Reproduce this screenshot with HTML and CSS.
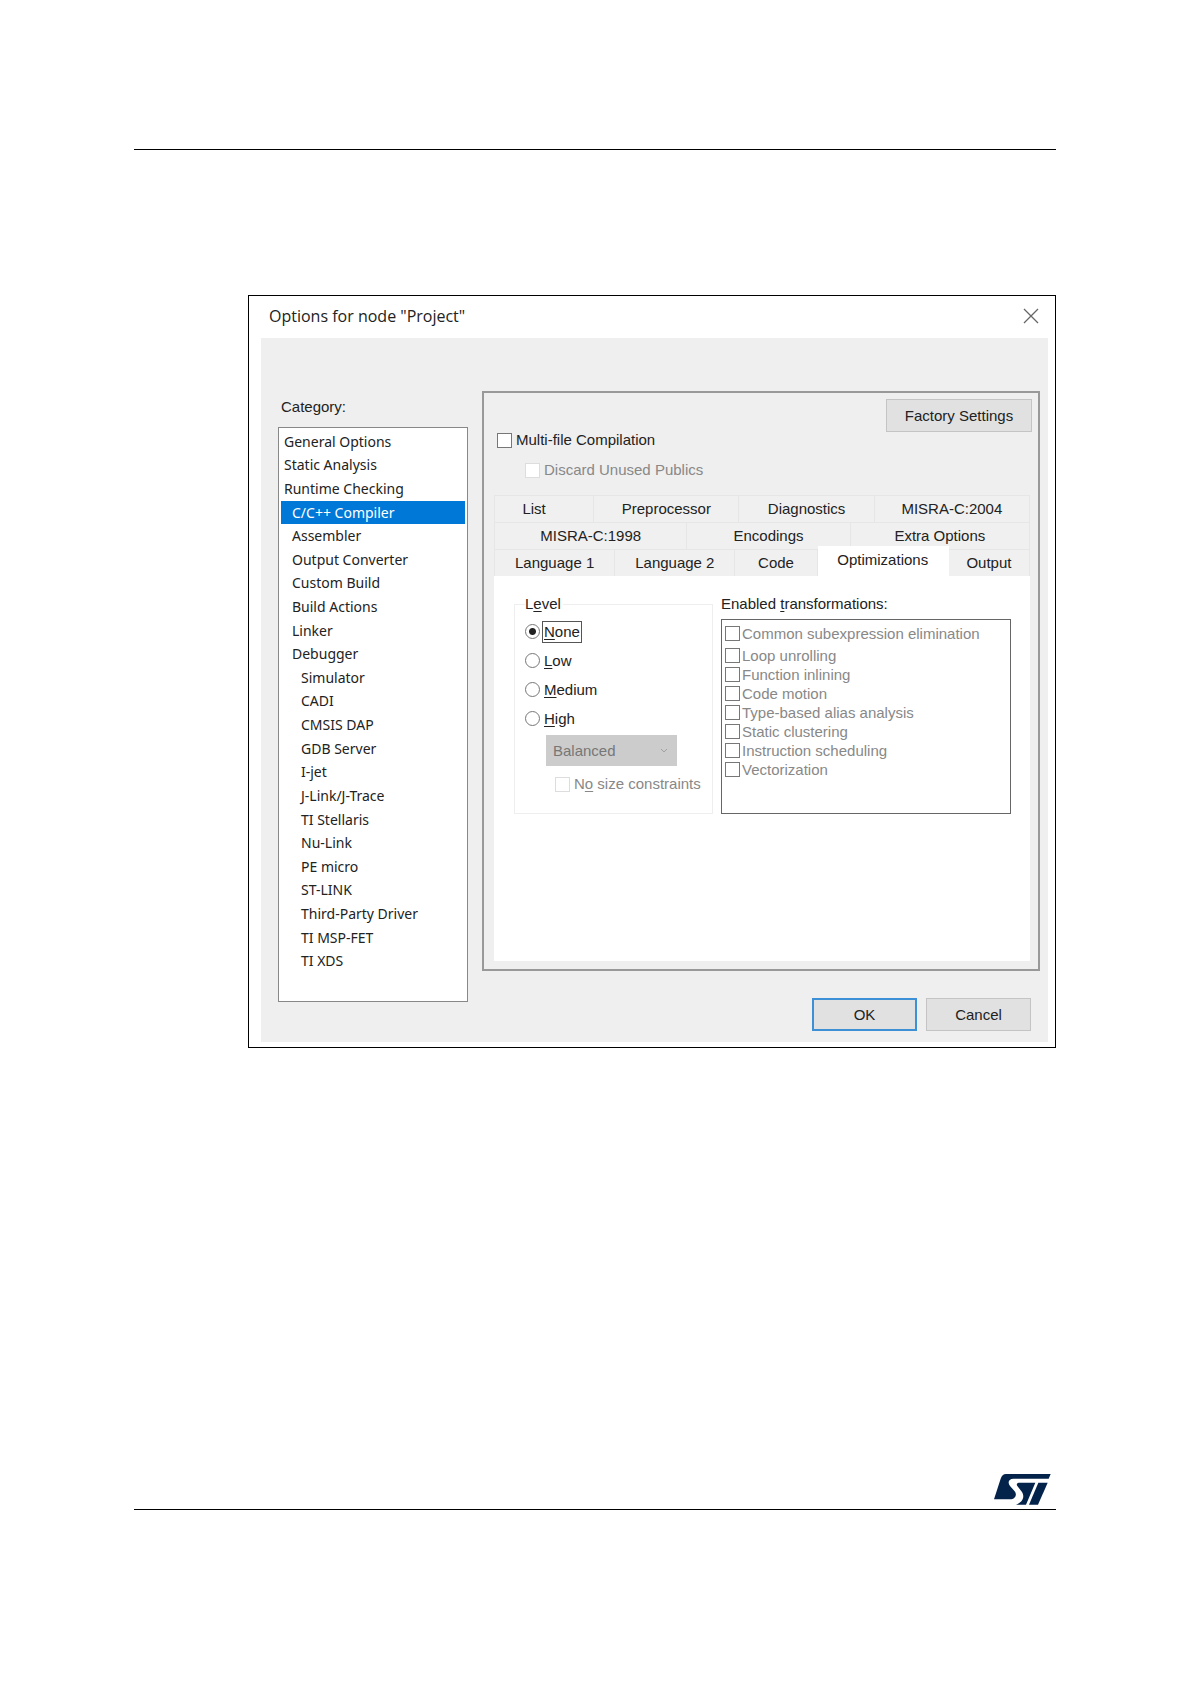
FILE: index.html
```
<!DOCTYPE html>
<html lang="en">
  <head>
    <meta charset="UTF-8" />
    <meta name="viewport" content="width=device-width, initial-scale=1.0" />
    <title>Options for node "Project"</title>
    <link rel="stylesheet" href="styles.css">
  </head>
  <body>
    <div class="page">
      <header class="page-header"></header>
      <main>
        <section class="dialog">
          <div class="dialog-title">
            <h1>Options for node "Project"</h1>
            <button class="close" type="button" aria-label="Close">
              <svg width="16" height="16" viewBox="0 0 16 16" fill="none" stroke="#666" stroke-width="1.3">
                <path d="M1 1l14 14M15 1L1 15" />
              </svg>
            </button>
          </div>
          <div class="dialog-body">
            <nav class="category" aria-labelledby="category">
              <div class="category-label" id="category">Category:</div>
              <ul class="category-list">
                <li><button type="button">General Options</button></li>
                <li><button type="button">Static Analysis</button></li>
                <li><button type="button">Runtime Checking</button></li>
                <li><button class="sub selected" type="button">C/C++ Compiler</button></li>
                <li><button class="sub" type="button">Assembler</button></li>
                <li><button class="sub" type="button">Output Converter</button></li>
                <li><button class="sub" type="button">Custom Build</button></li>
                <li><button class="sub" type="button">Build Actions</button></li>
                <li><button class="sub" type="button">Linker</button></li>
                <li><button class="sub" type="button">Debugger</button></li>
                <li><button class="subsub" type="button">Simulator</button></li>
                <li><button class="subsub" type="button">CADI</button></li>
                <li><button class="subsub" type="button">CMSIS DAP</button></li>
                <li><button class="subsub" type="button">GDB Server</button></li>
                <li><button class="subsub" type="button">I-jet</button></li>
                <li><button class="subsub" type="button">J-Link/J-Trace</button></li>
                <li><button class="subsub" type="button">TI Stellaris</button></li>
                <li><button class="subsub" type="button">Nu-Link</button></li>
                <li><button class="subsub" type="button">PE micro</button></li>
                <li><button class="subsub" type="button">ST-LINK</button></li>
                <li><button class="subsub" type="button">Third-Party Driver</button></li>
                <li><button class="subsub" type="button">TI MSP-FET</button></li>
                <li><button class="subsub" type="button">TI XDS</button></li>
              </ul>
            </nav>
            <div class="settings">
              <div class="panel">
                <div class="panel-top">
                  <button class="btn btn-factory" type="button">Factory Settings</button>
                </div>
                <div class="panel-inner">
                  <label class="check"><input type="checkbox" />Multi-file Compilation</label>
                  <label class="check check-discard"><input type="checkbox" disabled />Discard Unused Publics</label>

                  <div class="tabs" role="tablist">
                    <div class="tab-row tab-row-1">
                      <button class="tab-list" type="button" role="tab">List</button>
                      <button type="button" role="tab">Preprocessor</button>
                      <button type="button" role="tab">Diagnostics</button>
                      <button type="button" role="tab">MISRA-C:2004</button>
                    </div>
                    <div class="tab-row tab-row-2">
                      <button type="button" role="tab">MISRA-C:1998</button>
                      <button type="button" role="tab">Encodings</button>
                      <button type="button" role="tab">Extra Options</button>
                    </div>
                    <div class="tab-row tab-row-3">
                      <button type="button" role="tab">Language 1</button>
                      <button type="button" role="tab">Language 2</button>
                      <button type="button" role="tab">Code</button>
                      <button class="active" type="button" role="tab" aria-selected="true">Optimizations</button>
                      <button type="button" role="tab">Output</button>
                    </div>
                  </div>

                  <div class="tab-content">
                    <fieldset class="level">
                      <legend>L<u>e</u>vel</legend>
                      <label class="radio"><input type="radio" name="level" checked /><span class="focus"><u>N</u>one</span></label>
                      <label class="radio"><input type="radio" name="level" /><span><u>L</u>ow</span></label>
                      <label class="radio"><input type="radio" name="level" /><span><u>M</u>edium</span></label>
                      <label class="radio"><input type="radio" name="level" /><span><u>H</u>igh</span></label>
                      <div class="select">
                        <select aria-label="High level strategy" disabled>
                          <option>Balanced</option>
                        </select>
                        <svg width="8" height="5" viewBox="0 0 8 5" fill="none" stroke="#a0a0a0">
                          <path d="M1 1l3 3 3-3" />
                        </svg>
                      </div>
                      <label class="check check-size"><input type="checkbox" disabled /><span>N<u>o</u> size constraints</span></label>
                    </fieldset>

                    <div class="transformations">
                      <div class="transformations-label" id="transformations">Enabled <u>t</u>ransformations:</div>
                      <div class="transformations-list" role="group" aria-labelledby="transformations">
                        <label><input type="checkbox" disabled />Common subexpression elimination</label>
                        <label><input type="checkbox" disabled />Loop unrolling</label>
                        <label><input type="checkbox" disabled />Function inlining</label>
                        <label><input type="checkbox" disabled />Code motion</label>
                        <label><input type="checkbox" disabled />Type-based alias analysis</label>
                        <label><input type="checkbox" disabled />Static clustering</label>
                        <label><input type="checkbox" disabled />Instruction scheduling</label>
                        <label><input type="checkbox" disabled />Vectorization</label>
                      </div>
                    </div>
                  </div>
                </div>
              </div>
              <div class="actions">
                <button class="btn btn-ok" type="button">OK</button>
                <button class="btn" type="button">Cancel</button>
              </div>
            </div>
          </div>
        </section>
      </main>
      <footer class="page-footer">
        <svg class="logo" width="57" height="31" viewBox="0 0 171 93" fill="#03234b" role="img" aria-label="ST">
          <path d="M36 0H170L164 14H58C44 14 40 26 48 36L62 52C70 62 64 74 52 76H0L20 14C23 5 28 0 36 0Z" />
          <path d="M66 92C84 86 94 70 84 54L70 36C66 30 70 26 76 26H124L96 92Z" />
          <path d="M133 26H161L132 92H105Z" />
        </svg>
      </footer>
    </div>
  </body>
</html>
```

FILE: styles.css
```
* {
  margin: 0;
  padding: 0;
  box-sizing: border-box;
}

body {
  background-color: #fff;
  color: #222;
  font-family: "Liberation Sans", Arial, sans-serif;
  font-size: 15px;
  line-height: 20px;
}

button,
select {
  font: inherit;
  color: inherit;
  border: none;
  background: none;
}

u {
  text-underline-offset: 2px;
  text-decoration-thickness: 1px;
}

.page {
  display: flex;
  flex-direction: column;
  min-height: 100vh;
  padding: 0 134px 174px;
}
.page-header {
  height: 150px;
  border-bottom: 1px solid #000;
}
.page-footer {
  display: flex;
  justify-content: flex-end;
  margin-top: auto;
  padding: 0 5px 4px 0;
  border-bottom: 1px solid #000;
}
.logo {
  display: block;
}

/* dialog */
.dialog {
  margin: 145px 0 40px 114px;
  padding: 0 7px 5px 12px;
  border: 1px solid #000;
}
.dialog-title {
  display: flex;
  justify-content: space-between;
  align-items: center;
  height: 42px;
  padding: 0 9px 2px 8px;
}
.dialog-title h1 {
  font-family: "Open Sans", "Noto Sans", sans-serif;
  font-size: 16px;
  font-weight: 400;
}
.close {
  display: flex;
}
.dialog-body {
  display: grid;
  grid-template-columns: 190fr 558fr;
  gap: 14px;
  padding: 53px 8px 11px 17px;
  background-color: #efefef;
}

/* category list */
.category {
  padding-top: 6px;
}
.category-label {
  padding-left: 3px;
}
.category-list {
  display: grid;
  grid-auto-rows: 1fr;
  min-height: 575px;
  margin-top: 10px;
  padding: 2px 2px 28px;
  border: 1px solid #888;
  background-color: #fff;
  list-style-type: none;
  font-family: "Noto Sans", sans-serif;
  font-size: 14px;
}
.category-list li {
  display: flex;
}
.category-list button {
  width: 100%;
  padding-left: 3px;
  text-align: left;
}
.category-list .sub {
  padding-left: 11px;
}
.category-list .subsub {
  padding-left: 20px;
}
.category-list .selected {
  background-color: #0078d7;
  color: #fff;
}

/* settings panel */
.panel {
  padding: 6px 6px 8px 10px;
  border: 2px solid #999;
}
.panel-top {
  display: flex;
  justify-content: flex-end;
}
.panel-inner {
  padding-right: 2px;
}
.btn {
  width: 105px;
  height: 33px;
  border: 1px solid #c4c4c4;
  background-color: #e1e1e1;
}
.btn-factory {
  width: 146px;
}
.btn-ok {
  border: 2px solid #3d8fd6;
}
.actions {
  display: flex;
  justify-content: flex-end;
  gap: 9px;
  margin-top: 27px;
  padding-right: 9px;
}

input[type="checkbox"] {
  appearance: none;
  flex: none;
  width: 15px;
  height: 15px;
  border: 1px solid #777;
  background-color: #fff;
}
.check {
  display: flex;
  align-items: center;
  gap: 4px;
  height: 16px;
  padding-left: 3px;
}
.check input:disabled {
  border-color: #ddd;
}
.check-discard,
.check-size {
  color: #888;
}
.check-discard {
  margin-top: 14px;
  padding-left: 31px;
}

/* tabs */
.tabs {
  margin-top: 17px;
}
.tab-row {
  display: grid;
  height: 27px;
}
.tab-row-1 {
  grid-template-columns: 100fr 145fr 135fr 155fr;
}
.tab-row-2 {
  grid-template-columns: 193fr 163fr 179fr;
}
.tab-row-3 {
  grid-template-columns: 121fr 120fr 82fr 131fr 81fr;
}
.tab-row button {
  border: 1px solid #e6e6e6;
  border-width: 1px 1px 0 0;
  background-color: #f0f0f0;
}
.tab-row button:first-child {
  border-left-width: 1px;
}
.tab-row .tab-list {
  padding-right: 20px;
}
.tab-row .active {
  margin-top: -3px;
  padding-bottom: 3px;
  border-color: #fff;
  background-color: #fff;
}
.tab-content {
  display: grid;
  grid-template-columns: 199fr 290fr;
  align-items: start;
  gap: 8px;
  min-height: 385px;
  padding: 18px 19px 20px 20px;
  background-color: #fff;
}

/* level */
.level {
  min-width: 0;
  padding: 3px 10px 21px;
  border: 1px solid #eee;
}
.level legend {
  padding-right: 2px;
}
.radio {
  display: flex;
  align-items: center;
  gap: 2px;
  height: 29px;
}
.radio input {
  appearance: none;
  width: 15px;
  height: 15px;
  border: 1px solid #777;
  border-radius: 50%;
}
.radio input:checked {
  background: radial-gradient(#222 0 3px, #fff 4px);
}
.radio span {
  padding: 0 1px;
  border: 1px solid transparent;
}
.radio .focus {
  border-color: #555;
}
.select {
  position: relative;
  width: 131px;
  margin: 2px 0 0 21px;
}
.select select {
  appearance: none;
  width: 100%;
  height: 31px;
  padding-left: 7px;
  background-color: #ccc;
  color: #777;
  opacity: 1;
}
.select svg {
  position: absolute;
  top: 13px;
  right: 9px;
}
.check-size {
  margin-top: 10px;
  padding-left: 30px;
  white-space: nowrap;
}

/* transformations */
.transformations-list {
  min-height: 195px;
  margin-top: 5px;
  padding: 4px 3px;
  border: 1px solid #666;
  color: #888;
}
.transformations-list label {
  display: flex;
  align-items: center;
  gap: 2px;
  height: 19px;
  white-space: nowrap;
}
.transformations-list label:first-child {
  margin-bottom: 3px;
}
```
